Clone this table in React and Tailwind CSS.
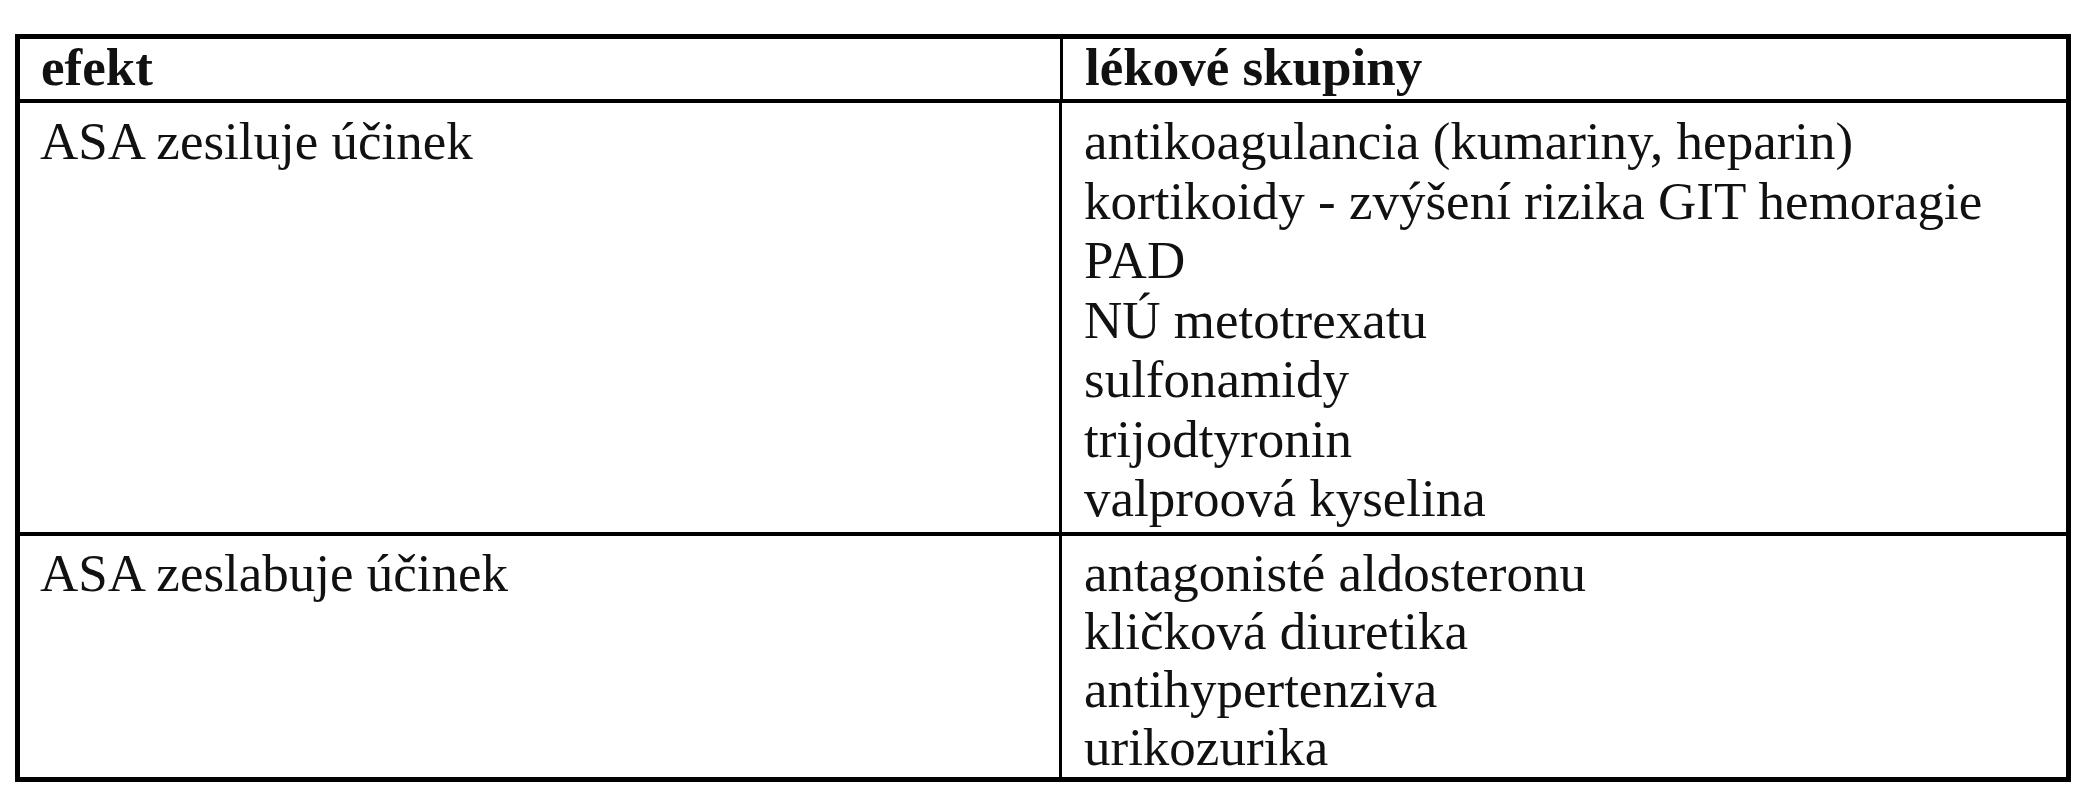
import React from "react";

const row1 = [
  "antikoagulancia (kumariny, heparin)",
  "kortikoidy - zvýšení rizika GIT hemoragie",
  "PAD",
  "NÚ metotrexatu",
  "sulfonamidy",
  "trijodtyronin",
  "valproová kyselina",
];

const row2 = [
  "antagonisté aldosteronu",
  "kličková diuretika",
  "antihypertenziva",
  "urikozurika",
];

export default function App() {
  return (
    <div
      className="w-[2085px] h-[800px] bg-white pt-[34px] pl-[15px] text-[#111]"
      style={{ fontFamily: '"Liberation Serif", "Times New Roman", serif' }}
    >
      <div className="w-[2056px] border-[5px] border-black flex flex-col text-[53px]">
        <div className="flex h-[60px] border-b-[4px] border-black box-content">
          <div className="w-[1019px] border-r-[3px] border-black box-content pl-[21px] font-bold leading-[56px]">
            efekt
          </div>
          <div className="flex-1 pl-[22px] font-bold leading-[56px]">lékové skupiny</div>
        </div>
        <div className="flex h-[429px] border-b-[4px] border-black box-content">
          <div className="w-[1019px] border-r-[3px] border-black box-content pl-[20px] pt-[9px] leading-[59.5px]">
            ASA zesiluje účinek
          </div>
          <div className="flex-1 pl-[22px] pt-[9px] leading-[59.5px] flex flex-col">
            {row1.map((t) => (
              <div key={t}>{t}</div>
            ))}
          </div>
        </div>
        <div className="flex h-[241px]">
          <div className="w-[1019px] border-r-[3px] border-black box-content pl-[20px] pt-[8px] leading-[58px]">
            ASA zeslabuje účinek
          </div>
          <div className="flex-1 pl-[22px] pt-[8px] leading-[58px] flex flex-col">
            {row2.map((t) => (
              <div key={t}>{t}</div>
            ))}
          </div>
        </div>
      </div>
    </div>
  );
}
